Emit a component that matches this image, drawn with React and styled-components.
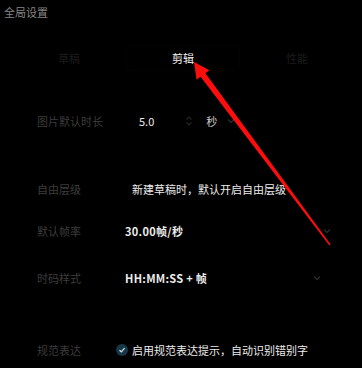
import React from "react";
import styled, { createGlobalStyle } from "styled-components";

const GlobalStyle = createGlobalStyle`
  html, body {
    margin: 0;
    padding: 0;
    background: #000;
  }
  body {
    font-family: "Noto Sans CJK SC", "Noto Sans", sans-serif;
    font-size: 11px;
  }
`;

const Page = styled.div`
  position: relative;
  width: 362px;
  height: 368px;
  overflow: hidden;
  background: #000;
`;

const Title = styled.div`
  color: #858585;
  padding: 3px 0 0 4px;
  height: 18px;
  line-height: 18px;
`;

const Tabs = styled.div`
  display: grid;
  grid-template-columns: repeat(3, 114px);
  margin: 24px 0 0 12px;
`;

const Tab = styled.div`
  height: 24px;
  line-height: 24px;
  text-align: center;
  border-radius: 4px;
  color: ${(p) => (p.$active ? "#f2f2f2" : "#1c1c1c")};
  border: 1px solid ${(p) => (p.$active ? "#040404" : "transparent")};
`;

const Rows = styled.div`
  display: flex;
  flex-direction: column;
  margin-top: 38px;
`;

const Row = styled.div`
  display: grid;
  grid-template-columns: 79px 1fr;
  align-items: center;
  padding-left: 37px;
  height: 24px;
  margin-top: ${(p) => p.$top || 0}px;
  margin-bottom: ${(p) => p.$gap}px;
`;

const Label = styled.div`
  color: #3c3c3c;
`;

const Value = styled.div`
  display: flex;
  align-items: center;
  color: #ececec;
  padding-left: ${(p) => p.$indent || 0}px;
  font-weight: ${(p) => (p.$bold ? 700 : 400)};
  letter-spacing: ${(p) => (p.$bold ? "0.3px" : "0")};
`;

const Spacer = styled.span`
  display: inline-block;
  width: ${(p) => p.$w}px;
`;

const Unit = styled.span`
  color: #cfcfcf;
`;

const Check = styled.span`
  width: 12px;
  height: 12px;
  border-radius: 50%;
  background: #173847;
  display: inline-flex;
  align-items: center;
  justify-content: center;
  margin-right: 4px;
`;

const Arrow = styled.svg`
  position: absolute;
  left: 0;
  top: 0;
  pointer-events: none;
`;

const Chevron = ({ color = "#2e2e2e" }) => (
  <svg width="8" height="6" viewBox="0 0 8 6">
    <path d="M1 1.5 L4 4.5 L7 1.5" fill="none" stroke={color} strokeWidth="1.2" />
  </svg>
);

const Stepper = () => (
  <svg width="8" height="12" viewBox="0 0 8 12">
    <path d="M1.5 4.5 L4 2 L6.5 4.5 M1.5 7.5 L4 10 L6.5 7.5" fill="none" stroke="#262626" strokeWidth="1.1" />
  </svg>
);

export default function App() {
  return (
    <>
      <GlobalStyle />
      <Page>
        <Title>全局设置</Title>
        <Tabs>
          <Tab>草稿</Tab>
          <Tab $active>剪辑</Tab>
          <Tab>性能</Tab>
        </Tabs>
        <Rows>
          <Row $gap={44}>
            <Label>图片默认时长</Label>
            <Value $indent={23}>
              5.0
              <Spacer $w={31} />
              <Stepper />
              <Spacer $w={13} />
              <Unit>秒</Unit>
              <Spacer $w={10} />
              <Chevron />
            </Value>
          </Row>
          <Row $gap={18}>
            <Label>自由层级</Label>
            <Value $indent={16}>新建草稿时，默认开启自由层级</Value>
          </Row>
          <Row $gap={23}>
            <Label>默认帧率</Label>
            <Value $indent={9} $bold>
              30.00帧/秒
              <Spacer $w={140} />
              <Chevron />
            </Value>
          </Row>
          <Row $gap={47}>
            <Label>时码样式</Label>
            <Value $indent={9} $bold>
              HH:MM:SS + 帧
              <Spacer $w={106} />
              <Chevron />
            </Value>
          </Row>
          <Row $gap={0} $top={1}>
            <Label>规范表达</Label>
            <Value>
              <Check>
                <svg width="8" height="8" viewBox="0 0 8 8">
                  <path d="M1.5 4.2 L3.3 5.8 L6.6 2.2" fill="none" stroke="#d8e4ea" strokeWidth="1.2" />
                </svg>
              </Check>
              启用规范表达提示，自动识别错别字
            </Value>
          </Row>
        </Rows>
        <Arrow width="362" height="368" viewBox="0 0 362 368">
          <polygon
            points="194,62 209.4,70.2 205.4,73.2 330.6,244.6 329.4,245.4 200.6,76.8 196.6,79.8"
            fill="#ff0d0d"
          />
        </Arrow>
      </Page>
    </>
  );
}
